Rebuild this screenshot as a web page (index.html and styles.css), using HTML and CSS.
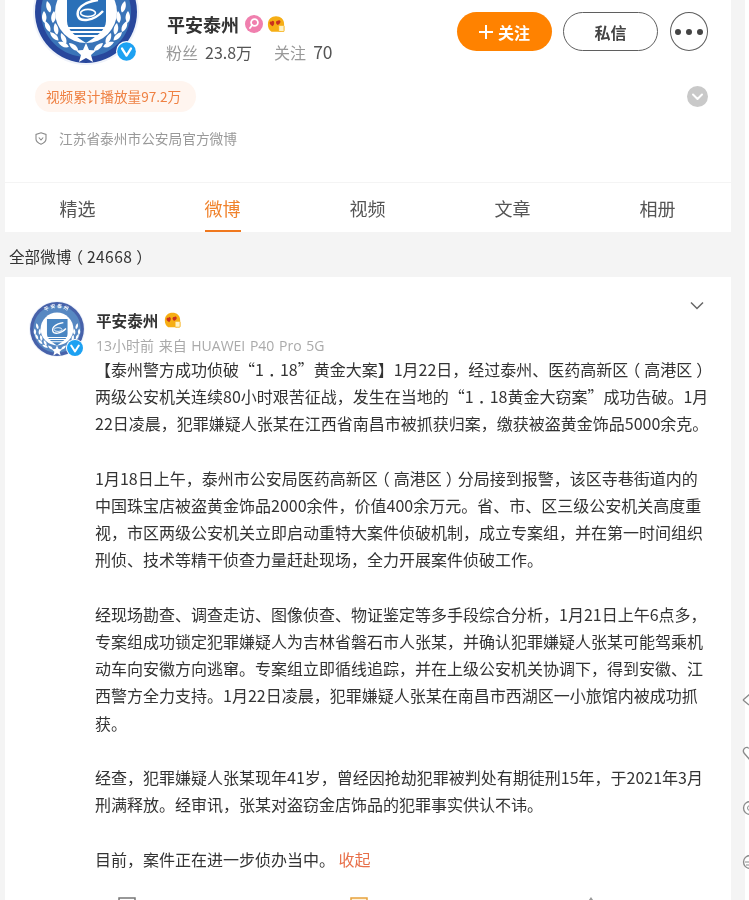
FILE: index.html
```html
<!DOCTYPE html>
<html lang="zh-CN">
<head>
<meta charset="utf-8">
<title>平安泰州</title>
<link rel="stylesheet" href="styles.css">
</head>
<body>
<svg class="defs" width="0" height="0" aria-hidden="true">
  <defs>
    <g id="leaf"><path d="M0 0C4-3 9-3 12 0C9 3 4 3 0 0Z" fill="#fff"/></g>
    <path id="seal-arc" d="M13 53A40 40 0 0 1 93 53"/>
    <g id="seal">
      <circle cx="53" cy="53" r="53" fill="#eef2fa"/>
      <circle cx="53" cy="53" r="51" fill="#28479c"/>
      <circle cx="53" cy="53" r="45" fill="#3a74b8"/>
      <text class="seal-text"><textPath href="#seal-arc" startOffset="50%" text-anchor="middle">平安泰州</textPath></text>
      <g>
        <use href="#leaf" transform="translate(14 42) rotate(75)"/>
        <use href="#leaf" transform="translate(11 52) rotate(88)"/>
        <use href="#leaf" transform="translate(21 52) rotate(95)"/>
        <use href="#leaf" transform="translate(12 62) rotate(65)"/>
        <use href="#leaf" transform="translate(22 64) rotate(80)"/>
        <use href="#leaf" transform="translate(17 73) rotate(45)"/>
        <use href="#leaf" transform="translate(28 74) rotate(65)"/>
        <use href="#leaf" transform="translate(25 83) rotate(25)"/>
        <use href="#leaf" transform="translate(36 84) rotate(40)"/>
        <use href="#leaf" transform="translate(92 42) rotate(105)"/>
        <use href="#leaf" transform="translate(95 52) rotate(92)"/>
        <use href="#leaf" transform="translate(85 52) rotate(85)"/>
        <use href="#leaf" transform="translate(94 62) rotate(115)"/>
        <use href="#leaf" transform="translate(84 64) rotate(100)"/>
        <use href="#leaf" transform="translate(89 73) rotate(135)"/>
        <use href="#leaf" transform="translate(78 74) rotate(115)"/>
        <use href="#leaf" transform="translate(81 83) rotate(155)"/>
        <use href="#leaf" transform="translate(70 84) rotate(140)"/>
      </g>
      <circle cx="53" cy="53" r="31" fill="#fff"/>
      <path d="M34 34H73V62C73 72 62 78 53 84C44 78 34 72 34 62Z" fill="#2a70b8"/>
      <path d="M34 69H73M36 73H71M40 77H66" stroke="#fff" stroke-width="2"/>
      <path d="M65 41C50 43 43 50 45 57C47 63 60 63 70 52" fill="none" stroke="#fff" stroke-width="2.500"/>
      <ellipse cx="55" cy="54" rx="7.500" ry="3.600" fill="#2a70b8" stroke="#fff" stroke-width="1.600"/>
      <path d="M53 84L56 91L63 91.500L58 96L60 103L53 99L46 103L48 96L43 91.500L50 91Z" fill="#fff"/>
    </g>
    <g id="crown">
      <path d="M1 9C1 3 5 0 10 0C15 0 19 3 19 9C19 12 18 15 15 17H5C2 15 1 12 1 9Z" fill="#f6ae14"/>
      <path d="M5 6C6 4 8 5 8 7C8 9 7 10 6 11C5 10 3 9 3 7.500C3 6 4 5.500 5 6Z" fill="#c8301e"/>
      <path d="M12 5C13 3.500 15 4.500 15 6C15 7.500 13 9 12 9.500C11 9 10 8 10 6.500C10 5.500 11 4.500 12 5Z" fill="#c8301e"/>
      <rect x="13" y="10" width="6" height="7" rx="1" fill="#fff3c4" stroke="#f6ae14"/>
    </g>
    <g id="verified">
      <circle cx="9" cy="9" r="9" fill="#fff"/>
      <circle cx="9" cy="9" r="8" fill="#1da1f2"/>
      <path d="M5.200 6.500L9 12.500L12.800 6.500" fill="none" stroke="#fff" stroke-width="2" stroke-linecap="round" stroke-linejoin="round"/>
    </g>
  </defs>
</svg>

<div class="page">
  <div class="gutter-left"></div>
  <main class="main">
    <section class="profile">
      <div class="profile-top">
        <div class="avatar-big">
          <svg class="avatar-big-img" viewBox="0 41 106 65" width="106" height="65" aria-hidden="true"><use href="#seal"/></svg>
          <svg class="badge-big" viewBox="0 0 18 18" width="21" height="21" aria-hidden="true"><use href="#verified"/></svg>
        </div>
        <div class="identity">
          <div class="name-row">
            <span class="name">平安泰州</span>
            <svg class="pink-badge" viewBox="0 0 18 18" width="18" height="18" aria-hidden="true">
              <circle cx="9" cy="9" r="9" fill="#f07fae"/>
              <circle cx="9.500" cy="7.500" r="3.400" fill="none" stroke="#fff" stroke-width="1.800"/>
              <path d="M7.200 10L5 13" stroke="#fff" stroke-width="1.800" stroke-linecap="round"/>
            </svg>
            <svg class="crown" viewBox="0 0 20 17" width="18" height="16" aria-hidden="true"><use href="#crown"/></svg>
          </div>
          <div class="stats">
            <span class="stat-label">粉丝</span><span class="stat-value">23.8万</span><span class="stat-label stat-second">关注</span><span class="stat-value stat-big">70</span>
          </div>
        </div>
        <div class="actions">
          <button class="btn btn-follow"><svg class="plus" viewBox="0 0 14 14" width="14" height="14" aria-hidden="true"><path d="M7 0V14M0 7H14" stroke="#fff" stroke-width="2"/></svg>关注</button>
          <button class="btn btn-msg">私信</button>
          <button class="btn-more" aria-label="更多"><i></i><i></i><i></i></button>
        </div>
      </div>
      <div class="pill-row">
        <span class="pill">视频累计播放量97.2万</span>
        <svg class="expand" viewBox="0 0 21 21" width="21" height="21" aria-hidden="true">
          <circle cx="10.500" cy="10.500" r="10.500" fill="#c9c9c9"/>
          <path d="M6 8.500L10.500 13L15 8.500" fill="none" stroke="#fff" stroke-width="2" stroke-linecap="round" stroke-linejoin="round"/>
        </svg>
      </div>
      <div class="desc">
        <svg viewBox="0 0 12 13" width="12" height="13" aria-hidden="true">
          <path d="M6 .8L11 2.500V7C11 9.500 8.500 11.200 6 12.200C3.500 11.200 1 9.500 1 7V2.500Z" fill="none" stroke="#8a8a8a" stroke-width="1.100"/>
          <path d="M3.800 5.500L6 8L8.200 5.500" fill="none" stroke="#8a8a8a" stroke-width="1.100"/>
        </svg>
        <span>江苏省泰州市公安局官方微博</span>
      </div>
    </section>

    <nav class="tabs">
      <a class="tab">精选</a>
      <a class="tab tab-active">微博</a>
      <a class="tab">视频</a>
      <a class="tab">文章</a>
      <a class="tab">相册</a>
    </nav>

    <div class="count">全部微博<span class="fw">（</span><span class="count-num">24668</span><span class="fw">）</span></div>

    <article class="post">
      <header class="post-head">
        <div class="avatar-small">
          <svg viewBox="0 0 106 106" width="56" height="56" aria-hidden="true"><use href="#seal"/></svg>
          <svg class="badge-small" viewBox="0 0 18 18" width="18" height="18" aria-hidden="true"><use href="#verified"/></svg>
        </div>
        <div class="post-meta">
          <div class="post-name"><b>平安泰州</b><svg viewBox="0 0 20 17" width="17" height="16" aria-hidden="true"><use href="#crown"/></svg></div>
          <div class="post-time">13小时前 来自 HUAWEI P40 Pro 5G</div>
        </div>
        <svg class="chevron" viewBox="0 0 14 9" width="14" height="9" aria-hidden="true">
          <path d="M1 1.500L7 7.500L13 1.500" fill="none" stroke="#666" stroke-width="1.500"/>
        </svg>
      </header>
      <div class="post-body">
        <p>【泰州警方成功侦破“1<span class="fw">．</span>18”黄金大案】1月22日，经过泰州、医药高新区<span class="fw">（</span>高港区<span class="fw">）</span><br>两级公安机关连续80小时艰苦征战，发生在当地的“1<span class="fw">．</span>18黄金大窃案”成功告破。1月<br>22日凌晨，犯罪嫌疑人张某在江西省南昌市被抓获归案，缴获被盗黄金饰品5000余克。</p>
        <p>1月18日上午，泰州市公安局医药高新区<span class="fw">（</span>高港区<span class="fw">）</span>分局接到报警，该区寺巷街道内的<br>中国珠宝店被盗黄金饰品2000余件，价值400余万元。省、市、区三级公安机关高度重<br>视，市区两级公安机关立即启动重特大案件侦破机制，成立专案组，并在第一时间组织<br>刑侦、技术等精干侦查力量赶赴现场，全力开展案件侦破工作。</p>
        <p>经现场勘查、调查走访、图像侦查、物证鉴定等多手段综合分析，1月21日上午6点多，<br>专案组成功锁定犯罪嫌疑人为吉林省磐石市人张某，并确认犯罪嫌疑人张某可能驾乘机<br>动车向安徽方向逃窜。专案组立即循线追踪，并在上级公安机关协调下，得到安徽、江<br>西警方全力支持。1月22日凌晨，犯罪嫌疑人张某在南昌市西湖区一小旅馆内被成功抓<br>获。</p>
        <p>经查，犯罪嫌疑人张某现年41岁，曾经因抢劫犯罪被判处有期徒刑15年，于2021年3月<br>刑满释放。经审讯，张某对盗窃金店饰品的犯罪事实供认不讳。</p>
        <p>目前，案件正在进一步侦办当中。 <a class="collapse">收起</a></p>
      </div>
      <footer class="post-actions">
        <svg viewBox="0 0 18 18" width="18" height="18" aria-hidden="true"><path d="M1 1H17V17H1Z" fill="none" stroke="#777" stroke-width="1.500"/></svg>
        <svg viewBox="0 0 18 18" width="18" height="18" aria-hidden="true"><path d="M1 1H17V17H1Z" fill="#fff3dc" stroke="#e8a33d" stroke-width="1.500"/></svg>
        <svg viewBox="0 0 18 18" width="18" height="18" aria-hidden="true"><path d="M9 1L13 7H5Z" fill="none" stroke="#999" stroke-width="1.200"/></svg>
      </footer>
    </article>
  </main>
  <div class="gutter-right"></div>
  <aside class="side">
    <svg viewBox="0 0 16 16" width="16" height="16" aria-hidden="true"><path d="M1 8L8 2H15M1 8L7 13" fill="none" stroke="#8a8a8a" stroke-width="1.300"/></svg>
    <svg viewBox="0 0 16 16" width="16" height="16" aria-hidden="true"><path d="M8 14L2 7C0 4 3 1 5.500 1.500C7 2 8 3 8 4" fill="none" stroke="#8a8a8a" stroke-width="1.300"/></svg>
    <svg viewBox="0 0 16 16" width="16" height="16" aria-hidden="true"><circle cx="8" cy="8" r="6.500" fill="none" stroke="#8a8a8a" stroke-width="1.300"/><circle cx="8" cy="8" r="2.500" fill="none" stroke="#8a8a8a"/></svg>
    <svg viewBox="0 0 16 16" width="16" height="16" aria-hidden="true"><circle cx="8" cy="8" r="6.500" fill="none" stroke="#8a8a8a" stroke-width="1.300"/><path d="M3 8H13M4 11H13" stroke="#8a8a8a"/></svg>
  </aside>
</div>
</body>
</html>
```

FILE: styles.css
```css
* { box-sizing: border-box; }
html, body { margin: 0; height: 900px; overflow: hidden; background: #fff; }
body { font-family: "Noto Sans CJK SC", "Liberation Sans", sans-serif; color: #333; }
.defs { position: absolute; }
.seal-text { font: 700 9px "Noto Sans CJK SC", sans-serif; fill: #fff; letter-spacing: 3px; }

.page { display: flex; height: 900px; filter: blur(.35px); }
.gutter-left { width: 5px; flex: none; background: #f4f4f4; }
.main { width: 726px; flex: none; background: #f4f4f4; }
.gutter-right { width: 14px; flex: none; background: #f4f4f4; }
.side { flex: none; width: 16px; margin-left: -3px; padding-top: 692px; display: flex; flex-direction: column; gap: 38px; position: relative; }

.profile { background: #fff; height: 182px; padding: 0 23px 0 28px; }
.profile-top { display: flex; height: 66px; }
.avatar-big { position: relative; width: 106px; height: 65px; flex: none; }
.avatar-big-img { display: block; }
.badge-big { position: absolute; left: 83px; top: 41px; }
.identity { margin-left: 27px; padding-top: 12px; }
.name-row { display: flex; align-items: center; height: 24px; }
.name { font-size: 18px; font-weight: 700; color: #333; line-height: 24px; margin-left: 1px; }
.pink-badge { margin-left: 6px; }
.crown { margin-left: 4px; }
.stats { margin-top: 5px; font-size: 16px; line-height: 22px; white-space: nowrap; }
.stat-label { color: #999; }
.stat-value { color: #555; margin-left: 7px; }
.stat-big { font-size: 17.500px; }
.stat-second { margin-left: 22px; }
.actions { margin-left: auto; padding-top: 12px; display: flex; gap: 11px; align-items: flex-start; }
.btn { width: 95px; height: 39px; border-radius: 20px; font: 700 16px/1 "Noto Sans CJK SC", sans-serif; padding: 0; cursor: pointer; }
.btn-follow { background: #ff8200; border: 0; color: #fff; display: flex; align-items: center; justify-content: center; gap: 5px; }
.btn-msg { background: #fff; border: 1.500px solid #5f5f5f; color: #444; margin-right: 1px; }
.btn-more { width: 38px; height: 39px; border-radius: 50%; background: #fff; border: 1.500px solid #5f5f5f; padding: 0; display: flex; align-items: center; justify-content: center; gap: 5px; }
.btn-more i { width: 6px; height: 6px; border-radius: 50%; background: #444; }

.pill-row { display: flex; align-items: center; justify-content: space-between; margin-top: 15px; padding-left: 2px; height: 31px; }
.pill { height: 31px; padding: 0 15px 0 11px; border-radius: 16px; background: #fff5ef; color: #ef8143; font-size: 13.600px; line-height: 31px; white-space: nowrap; }
.desc { display: flex; align-items: center; gap: 12px; margin-top: 15px; padding-left: 2px; color: #999; font-size: 13.700px; line-height: 22px; }

.tabs { display: flex; height: 49px; background: #fff; margin-top: 1px; padding-right: 1px; }
.tab { flex: 1; position: relative; text-align: center; font-size: 18px; line-height: 50px; color: #555; }
.tab-active { color: #f0832d; }
.tab-active::after { content: ""; position: absolute; left: 50%; bottom: 0; width: 36px; height: 2.500px; margin-left: -18px; background: #f0781e; }

.count { height: 45px; line-height: 49px; padding-left: 4px; font-size: 15.600px; color: #333; }
.count-num { letter-spacing: .4px; }
.fw { font-feature-settings: "halt"; padding: 0 .25em; }

.post { background: #fff; height: 640px; position: relative; padding: 24px 24px 0 24px; }
.post-head { display: flex; height: 56px; position: relative; }
.avatar-small { position: relative; width: 56px; height: 56px; flex: none; }
.avatar-small > svg:first-child { display: block; opacity: .85; }
.badge-small { position: absolute; left: 37px; top: 38px; }
.post-meta { margin-left: 11px; padding-top: 7px; }
.post-name { display: flex; align-items: center; gap: 6px; height: 24px; font-size: 15.600px; color: #333; }
.post-time { margin-top: 4px; font-family: "Open Sans", "Noto Sans CJK SC", sans-serif; font-size: 14px; word-spacing: 1px; line-height: 20px; color: #aaa; white-space: nowrap; }
.chevron { position: absolute; right: 3px; top: 0; }
.post-body { margin: -1px 0 0 66px; font-size: 16px; line-height: 27.200px; color: #333; white-space: nowrap; }
.post-body p { margin: 0 0 27.200px; }
.collapse { color: #e8704a; }
.post-actions { position: absolute; left: 113px; top: 620px; display: flex; gap: 214px; }
```
